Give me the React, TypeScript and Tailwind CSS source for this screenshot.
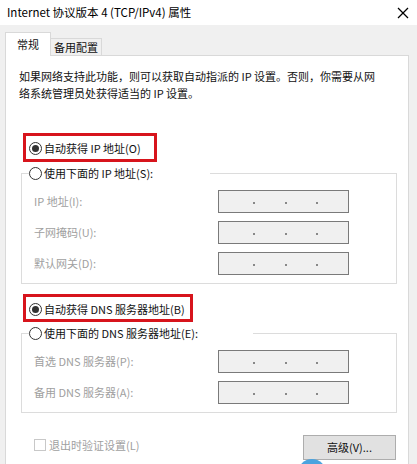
import { ReactNode } from 'react'

const font = { fontFamily: '"Noto Sans CJK SC", "Noto Sans", sans-serif' }

function Radio({ checked }: { checked?: boolean }) {
  return (
    <span className="w-[13px] h-[13px] rounded-full border border-[#333] bg-white flex items-center justify-center shrink-0">
      {checked && <span className="w-[7px] h-[7px] rounded-full bg-[#333]" />}
    </span>
  )
}

function IpBox() {
  return (
    <div className="w-[131px] h-[23px] border border-[#7a7a7a] bg-[#f0f0f0] flex items-center">
      <span className="w-[34px]" />
      <span className="w-[2px] h-[2px] rounded-full bg-[#666] mt-[3px]" />
      <span className="w-[30px]" />
      <span className="w-[2px] h-[2px] rounded-full bg-[#666] mt-[3px]" />
      <span className="w-[29px]" />
      <span className="w-[2px] h-[2px] rounded-full bg-[#666] mt-[3px]" />
    </div>
  )
}

function Row({ label }: { label: string }) {
  return (
    <div className="flex items-center">
      <span className="w-[184px] text-[#a0a0a0]">{label}</span>
      <IpBox />
    </div>
  )
}

function Group({ legend, legendW, children }: { legend: string; legendW: string; children: ReactNode }) {
  return (
    <fieldset className="border border-[#dcdcdc] pb-[8px] pt-[8px]">
      <legend className={`ml-[7px] h-[17px] flex items-center gap-[2px] ${legendW}`}>
        <Radio />
        <span>{legend}</span>
      </legend>
      <div className="flex flex-col gap-[8px] pl-[12px]">{children}</div>
    </fieldset>
  )
}

export default function App() {
  return (
    <div className="w-[417px] h-[464px] overflow-hidden bg-[#f0f0f0] relative text-[11px] text-[#111]" style={font}>
      {/* Title bar */}
      <div className="h-[25px] bg-white flex items-center justify-between pl-[7px] pr-[8px]">
        <span className="text-[11.5px] text-black">Internet 协议版本 4 (TCP/IPv4) 属性</span>
        <svg width="12" height="12" viewBox="0 0 12 12" className="shrink-0">
          <line x1="1" y1="1" x2="11" y2="11" stroke="#000" strokeWidth="1.3" />
          <line x1="11" y1="1" x2="1" y2="11" stroke="#000" strokeWidth="1.3" />
        </svg>
      </div>

      {/* Tabs */}
      <div className="flex items-end pt-[7px] pl-[5px]">
        <div className="w-[46px] h-[24px] bg-white border border-b-0 border-[#d9d9d9] flex items-center justify-center -mb-px relative z-10">
          常规
        </div>
        <div className="w-[51px] h-[17px] border-t border-r border-[#d9d9d9] flex items-center justify-center">
          备用配置
        </div>
      </div>

      {/* Panel */}
      <div className="ml-[5px] mr-[8px] h-[420px] bg-white border border-[#d9d9d9] pl-[15px] pr-[11px] pt-[12px]">
        <p className="-ml-[2px] leading-[17px]">
          如果网络支持此功能，则可以获取自动指派的 IP 设置。否则，你需要从网
          <br />
          络系统管理员处获得适当的 IP 设置。
        </p>

        <div className="mt-[31px] ml-[2px] w-[134px] h-[29px] border-[3px] border-[#d7141c] flex items-center gap-[2px] pl-[3px] pt-[2px]">
          <Radio checked />
          <span>自动获得 IP 地址(O)</span>
        </div>

        <div className="mt-[3px]">
          <Group legend="使用下面的 IP 地址(S):" legendW="w-[181px]">
            <Row label="IP 地址(I):" />
            <Row label="子网掩码(U):" />
            <Row label="默认网关(D):" />
          </Group>
        </div>

        <div className="mt-[10px] ml-[2px] w-[170px] h-[28px] border-[3px] border-[#d7141c] flex items-center gap-[2px] pl-[3px] pt-[2px]">
          <Radio checked />
          <span>自动获得 DNS 服务器地址(B)</span>
        </div>

        <div className="mt-[3px]">
          <Group legend="使用下面的 DNS 服务器地址(E):" legendW="w-[224px]">
            <Row label="首选 DNS 服务器(P):" />
            <Row label="备用 DNS 服务器(A):" />
          </Group>
        </div>

        <div className="mt-[22px] flex justify-between items-start">
          <div className="flex items-center gap-[3px] ml-[13px] mt-[2px]">
            <span className="w-[12px] h-[12px] border border-[#c8c8c8] bg-white" />
            <span className="text-[#a0a0a0]">退出时验证设置(L)</span>
          </div>
          <button className="w-[93px] h-[25px] mr-[1px] bg-[#e1e1e1] border border-[#adadad] text-[11px] text-[#111]">
            高级(V)...
          </button>
        </div>
      </div>

      {/* Cursor highlight */}
      <div className="absolute left-[298px] top-[459px] w-[28px] h-[28px] rounded-full bg-[#4aa3df]" />
    </div>
  )
}
